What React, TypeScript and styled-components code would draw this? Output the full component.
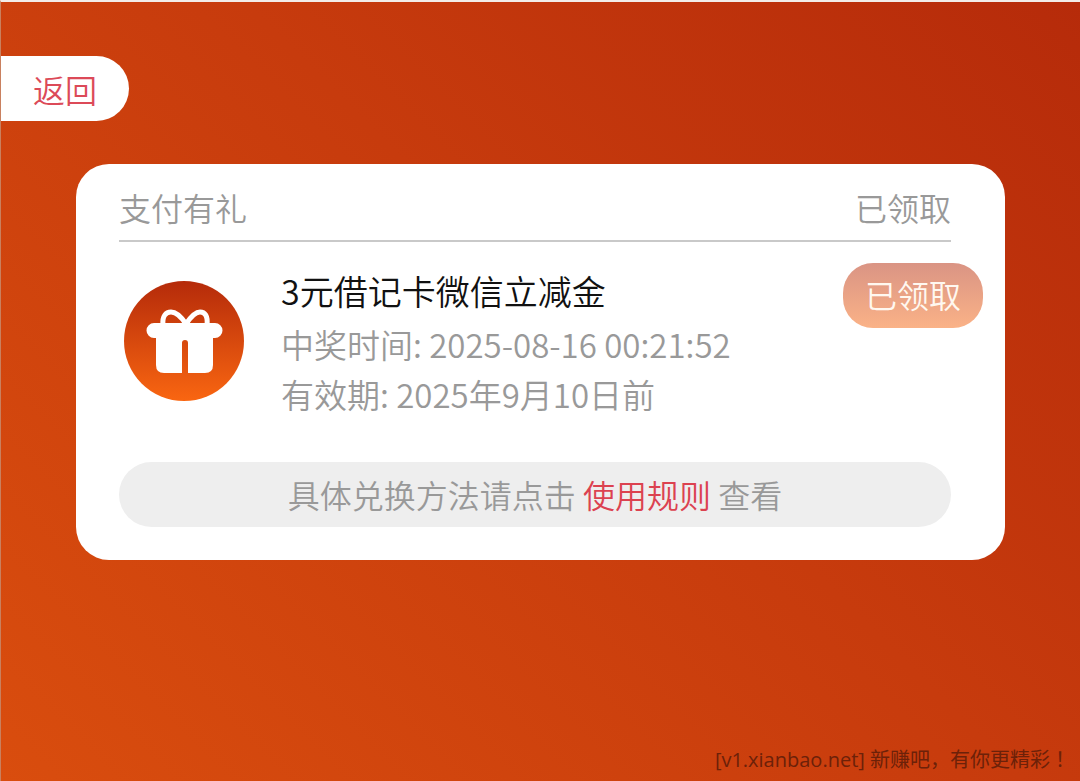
import React from "react";
import styled, { createGlobalStyle } from "styled-components";

const GlobalStyle = createGlobalStyle`
  * { box-sizing: border-box; }
  body {
    margin: 0;
    font-family: "Noto Sans CJK SC", "Noto Sans", sans-serif;
    font-size: 32px;
    line-height: 48px;
    font-weight: 350;
  }
  button { font: inherit; border: 0; cursor: pointer; }
`;

const Page = styled.div`
  min-height: 100vh;
  display: flex;
  flex-direction: column;
  align-items: stretch;
  padding-top: 54px;
  border-top: 2px solid #f3ece8;
  border-left: 1px solid #c9805f;
  background: linear-gradient(45deg, #d94d0e 0%, #c73b0d 55%, #b62b0a 100%);
`;

const BackButton = styled.button`
  align-self: flex-start;
  height: 65px;
  padding: 0 32px;
  border-radius: 0 33px 33px 0;
  background: #fff;
  color: #dc4a58;
`;

const Card = styled.main`
  margin: 43px 75px 0;
  padding: 19px 54px 33px 43px;
  border-radius: 33px;
  background: #fff;
  color: #999;
`;

const CardHeader = styled.header`
  display: flex;
  justify-content: space-between;
  height: 59px;
  border-bottom: 2px solid #c9c9c9;
`;

const Heading = styled.h1`
  margin: 0;
  font: inherit;
`;

const Prize = styled.section`
  display: flex;
  align-items: flex-start;
  margin-right: -32px;
  padding-top: 21px;
`;

const GiftIcon = styled.svg`
  flex: none;
  width: 120px;
  height: 120px;
  margin: 18px 37px 0 5px;
`;

const Details = styled.div`
  flex: 1;
  min-width: 0;
`;

const PrizeTitle = styled.h2`
  margin: 2px 0;
  font-size: 34px;
  font-weight: inherit;
  line-height: 52px;
  color: #111;
`;

const Detail = styled.p`
  margin: 0;
  font-size: 33px;
  line-height: 50px;
`;

const ClaimedButton = styled.button`
  flex: none;
  height: 65px;
  padding: 0 22px 4px;
  border-radius: 30px;
  background: linear-gradient(#da9484, #fab287);
  color: #fff8f0;
`;

const RulesBar = styled.p`
  margin: 43px 0 0;
  padding: 8px 0 9px;
  border-radius: 33px;
  background: #eee;
  text-align: center;
`;

const RulesLink = styled.a`
  color: #dc4250;
  text-decoration: none;
`;

const Watermark = styled.footer`
  margin-top: auto;
  padding: 0 10px 6px;
  font-family: "Open Sans", "Noto Sans CJK SC", sans-serif;
  font-size: 20px;
  font-weight: 400;
  line-height: 30px;
  text-align: right;
  color: #6c2109;
`;

const CenteredMark = styled.span`
  font-family: "Noto Sans CJK TC", sans-serif;
`;

function Gift() {
  return (
    <GiftIcon viewBox="0 0 120 120" aria-hidden="true">
      <defs>
        <linearGradient id="disc" x1="0" y1="0" x2="0" y2="1">
          <stop offset="0" stopColor="#b52b0a" />
          <stop offset="1" stopColor="#f96611" />
        </linearGradient>
      </defs>
      <circle cx="60" cy="60" r="60" fill="url(#disc)" />
      <path
        d="M39 44C38 35 42 31 47 31C53 31 58 37 62 43C66 37 71 31 76 31C81 31 84 35 83 44"
        fill="none"
        stroke="#fff"
        strokeWidth="5"
      />
      <path
        d="M30 42H91A7.500 7.500 0 0 1 91 57H89V84Q89 92 81 92H64V62Q64 59 61 59Q58 59 58 62V92H40Q32 92 32 84V57H30A7.500 7.500 0 0 1 30 42Z"
        fill="#fff"
      />
    </GiftIcon>
  );
}

export default function App() {
  return (
    <>
      <GlobalStyle />
      <Page lang="zh-CN">
        <BackButton type="button">返回</BackButton>
        <Card>
          <CardHeader>
            <Heading>支付有礼</Heading>
            <span>已领取</span>
          </CardHeader>
          <Prize>
            <Gift />
            <Details>
              <PrizeTitle>3元借记卡微信立减金</PrizeTitle>
              <Detail>中奖时间: 2025-08-16 00:21:52</Detail>
              <Detail>有效期: 2025年9月10日前</Detail>
            </Details>
            <ClaimedButton type="button">已领取</ClaimedButton>
          </Prize>
          <RulesBar>
            具体兑换方法请点击 <RulesLink href="#rules">使用规则</RulesLink> 查看
          </RulesBar>
        </Card>
        <Watermark>
          [v1.xianbao.net] 新赚吧，有你更精彩<CenteredMark lang="zh-TW">！</CenteredMark>
        </Watermark>
      </Page>
    </>
  );
}
